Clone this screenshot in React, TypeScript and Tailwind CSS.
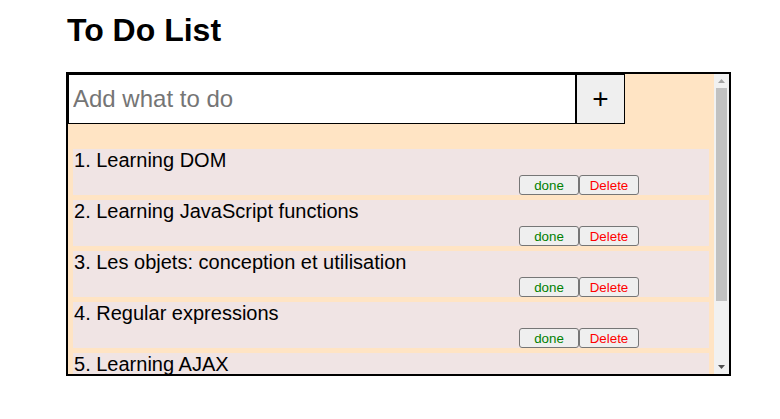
import { useState } from 'react';

interface Task {
  id: number;
  text: string;
}

const initialTasks: Task[] = [
  { id: 1, text: 'Learning DOM' },
  { id: 2, text: 'Learning JavaScript functions' },
  { id: 3, text: 'Les objets: conception et utilisation' },
  { id: 4, text: 'Regular expressions' },
  { id: 5, text: 'Learning AJAX' },
  { id: 6, text: 'Learning JSON' },
];

export default function App() {
  const [tasks, setTasks] = useState<Task[]>(initialTasks);
  const [value, setValue] = useState('');

  const addTask = () => {
    if (!value.trim()) return;
    setTasks([...tasks, { id: Date.now(), text: value.trim() }]);
    setValue('');
  };

  return (
    <div className="min-h-screen bg-white pl-[66px] text-black font-['Liberation_Sans',Arial,sans-serif]">
      <h1 className="pt-[12px] pb-[23px] pl-px text-[32px] leading-[37px] font-bold">To Do List</h1>
      <div className="w-[665px] h-[304px] border-2 border-black bg-[#ffe4c4] flex">
        <div className="w-[646px] h-full overflow-hidden">
          <div className="flex">
            <input
              value={value}
              onChange={(e) => setValue(e.target.value)}
              placeholder="Add what to do"
              className="w-[508px] h-[50px] border border-black bg-white pl-[4px] text-[24px] outline-none placeholder:text-[#757575]"
            />
            <button
              onClick={addTask}
              className="w-[49px] h-[50px] border border-black bg-[#efefef] text-[28px] leading-none"
            >
              +
            </button>
          </div>
          <ul className="flex flex-col gap-[5px] px-[5px] pt-[25px] pb-[7px]">
            {tasks.map((task, i) => (
              <li key={task.id} className="h-[46px] bg-[#f0e4e4] flex flex-col justify-between">
                <span className="pl-px text-[20px] leading-[23px]">
                  {i + 1}. {task.text}
                </span>
                <div className="flex justify-end pr-[70px]">
                  <button className="w-[60px] h-[20px] border border-[#767676] rounded-[3px] bg-[#efefef] text-[13.33px] text-[#008000]">
                    done
                  </button>
                  <button
                    onClick={() => setTasks(tasks.filter((t) => t.id !== task.id))}
                    className="w-[60px] h-[20px] border border-[#767676] rounded-[3px] bg-[#efefef] text-[13.33px] text-[#ff0000]"
                  >
                    Delete
                  </button>
                </div>
              </li>
            ))}
          </ul>
        </div>
        {/* scrollbar */}
        <div className="w-[15px] h-full bg-[#f1f1f1] flex flex-col">
          <div className="h-[14px] flex items-center justify-center">
            <svg width="7" height="4" viewBox="0 0 7 4">
              <polygon points="3.5,0 7,4 0,4" fill="#a3a3a3" />
            </svg>
          </div>
          <div className="mx-[2px] h-[213px] bg-[#c1c1c1]" />
          <div className="flex-1" />
          <div className="h-[14px] flex items-center justify-center">
            <svg width="7" height="4" viewBox="0 0 7 4">
              <polygon points="0,0 7,0 3.5,4" fill="#505050" />
            </svg>
          </div>
        </div>
      </div>
    </div>
  );
}
